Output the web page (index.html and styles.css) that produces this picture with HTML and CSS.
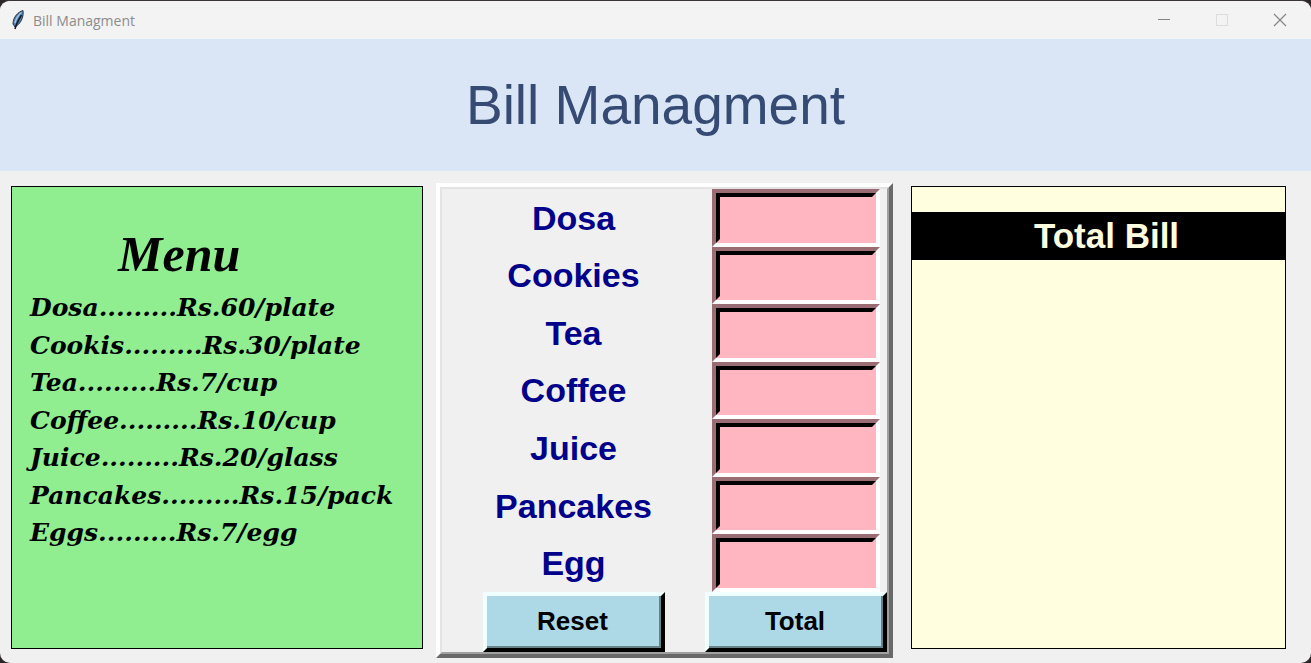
FILE: index.html
```html
<!DOCTYPE html>
<html lang="en">
<head>
<meta charset="utf-8">
<title>Bill Managment</title>
<link rel="stylesheet" href="styles.css">
</head>
<body>
<div class="window">
  <header class="titlebar">
    <svg class="feather" width="14" height="22" viewBox="0 0 14 22" aria-hidden="true">
      <path d="M12 1.500C7 3 2 8 2 15L4 18L6 16.500C10 14 13 7 12 1.500Z" fill="#4f81b3" stroke="#2a3440" stroke-width="1"/>
      <path d="M10.500 3.500C6.500 6.500 5 10 4 14" fill="none" stroke="#a5c3e0" stroke-width="1.500"/>
      <path d="M10.500 6C8 10 5.500 14 4 20" fill="none" stroke="#15191f" stroke-width="1.500"/>
    </svg>
    <span class="caption">Bill Managment</span>
    <div class="controls">
      <button type="button" class="control" aria-label="Minimize">
        <svg width="14" height="14" viewBox="0 0 14 14"><path d="M1 6.500H13" stroke="#858585"/></svg>
      </button>
      <button type="button" class="control" aria-label="Maximize" disabled>
        <svg width="14" height="14" viewBox="0 0 14 14"><rect x="1.500" y="1.500" width="11" height="11" fill="none" stroke="#dcdcdc"/></svg>
      </button>
      <button type="button" class="control" aria-label="Close">
        <svg width="14" height="14" viewBox="0 0 14 14"><path d="M1 1L13 13M13 1L1 13" stroke="#858585" stroke-width="1.200"/></svg>
      </button>
    </div>
  </header>
  <h1 class="banner">Bill Managment</h1>
  <main class="panels">
    <section class="panel menu">
      <h2 class="menu-title">Menu</h2>
      <ul class="menu-list">
        <li>Dosa.........Rs.60/plate</li>
        <li>Cookis.........Rs.30/plate</li>
        <li>Tea.........Rs.7/cup</li>
        <li>Coffee.........Rs.10/cup</li>
        <li>Juice.........Rs.20/glass</li>
        <li>Pancakes.........Rs.15/pack</li>
        <li>Eggs.........Rs.7/egg</li>
      </ul>
    </section>
    <form class="order">
      <div class="order-grid">
        <label class="item" for="dosa">Dosa</label>
        <div class="entry"><input class="entry-box" id="dosa" type="text"></div>
        <label class="item" for="cookies">Cookies</label>
        <div class="entry"><input class="entry-box" id="cookies" type="text"></div>
        <label class="item" for="tea">Tea</label>
        <div class="entry"><input class="entry-box" id="tea" type="text"></div>
        <label class="item" for="coffee">Coffee</label>
        <div class="entry"><input class="entry-box" id="coffee" type="text"></div>
        <label class="item" for="juice">Juice</label>
        <div class="entry"><input class="entry-box" id="juice" type="text"></div>
        <label class="item" for="pancakes">Pancakes</label>
        <div class="entry"><input class="entry-box" id="pancakes" type="text"></div>
        <label class="item" for="egg">Egg</label>
        <div class="entry"><input class="entry-box" id="egg" type="text"></div>
        <button class="action" type="reset"><span class="action-face">Reset</span></button>
        <button class="action" type="button"><span class="action-face">Total</span></button>
      </div>
    </form>
    <section class="panel bill">
      <h2 class="bill-title">Total Bill</h2>
    </section>
  </main>
</div>
</body>
</html>
```
FILE: styles.css
```css
* { box-sizing: border-box; }

body {
  margin: 0;
  background: #2b2728;
  font-family: "Liberation Sans", Arial, sans-serif;
}

.window {
  display: flex;
  flex-direction: column;
  min-height: 100vh;
  border-top: 1px solid #3a3536;
  border-radius: 10px;
  overflow: hidden;
  background: #f0f0f0;
}

.titlebar {
  display: flex;
  align-items: center;
  height: 38px;
  padding: 0 2px 0 11px;
  background: #f3f3f3;
}

.caption {
  margin-left: 8px;
  font: 14px "Open Sans", "Noto Sans", sans-serif;
  color: #8c8c8c;
}

.controls { display: flex; height: 100%; margin-left: auto; }

.control {
  display: grid;
  place-items: center;
  width: 58px;
  padding: 0;
  border: 0;
  background: transparent;
}

.banner {
  margin: 0;
  padding: 34px 0;
  background: #dae5f5;
  color: #364b73;
  font-size: 55px;
  font-weight: 400;
  line-height: 64px;
  text-align: center;
}

.panels {
  flex: 1;
  display: grid;
  grid-template-columns: 412fr 457fr 380fr;
  column-gap: 13px;
  padding: 12px 25px 5px 11px;
}

.panel {
  margin: 3px 0 9px;
  border: 1px solid #000;
}

.menu { padding: 38px 0 0 18px; background: #90ee90; }

.menu-title {
  margin: 0 0 6px 88px;
  font: italic bold 50px/58px "Lucida Calligraphy", "Liberation Serif", serif;
}

.menu-list {
  margin: 0;
  padding: 0;
  list-style: none;
  white-space: nowrap;
  font: italic bold 25px/1.5 "Lucida Calligraphy", "DejaVu Serif", serif;
}

.order {
  display: grid;
  border: 4px solid;
  border-color: #fff #696969 #696969 #fff;
}

.order-grid {
  display: grid;
  grid-template-columns: 1fr 182px;
  grid-template-rows: repeat(7, 1fr) auto;
  border: 2px solid;
  border-color: #e3e3e3 #a0a0a0 #a0a0a0 #e3e3e3;
}

.item {
  align-self: center;
  justify-self: center;
  color: #00008b;
  font-size: 34px;
  font-weight: 700;
  line-height: 40px;
}

.entry {
  display: grid;
  margin: 0 7px;
  border: 4px solid;
  border-color: #9a6c73 #fff #fff #9a6c73;
}

.entry-box {
  width: 100%;
  min-width: 0;
  padding: 0 4px;
  border: 4px solid;
  border-color: #000 #ffb6c1 #ffb6c1 #000;
  border-radius: 0;
  outline: 0;
  background: #ffb6c1;
  font: bold 26px "Liberation Sans", Arial, sans-serif;
}

.action {
  display: grid;
  justify-self: center;
  width: 182px;
  padding: 0;
  border: 4px solid;
  border-color: #f0ffff #000 #000 #f0ffff;
  border-radius: 0;
  background: #add8e6;
  color: #000;
  font: bold 26px/30px "Liberation Sans", Arial, sans-serif;
}

.action-face {
  padding: 10px 0;
  border: solid #688289;
  border-width: 0 2px 2px 0;
}

.bill { margin-left: 5px; background: #ffffe0; }

.bill-title {
  margin: 25px 0 0;
  background: #000;
  color: #ffffe0;
  padding: 4px 0;
  padding-left: 16px;
  font-size: 35px;
  line-height: 40px;
  text-align: center;
}
```
